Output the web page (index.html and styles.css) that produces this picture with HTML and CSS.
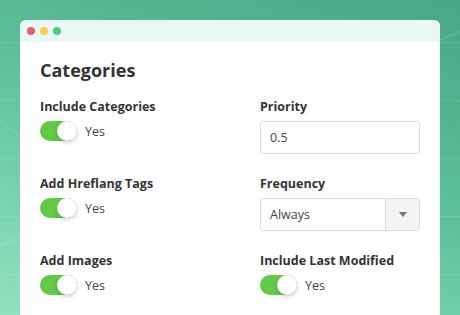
FILE: index.html
```html
<!DOCTYPE html>
<html lang="en">
<head>
    <meta charset="UTF-8">
    <title>Categories</title>
    <link rel="stylesheet" href="styles.css">
</head>
<body>

<div class="window">
    <div class="titlebar">
        <span class="dot red"></span>
        <span class="dot yellow"></span>
        <span class="dot green"></span>
    </div>

    <div class="content">
        <h1>Categories</h1>

        <div class="grid">
            <div class="field">
                <label>Include Categories</label>
                <div class="switch-row">
                    <span class="switch"><span class="knob"></span></span>
                    <span class="switch-text">Yes</span>
                </div>
            </div>
            <div class="field">
                <label>Priority</label>
                <div class="input">0.5</div>
            </div>

            <div class="field">
                <label>Add Hreflang Tags</label>
                <div class="switch-row">
                    <span class="switch"><span class="knob"></span></span>
                    <span class="switch-text">Yes</span>
                </div>
            </div>
            <div class="field">
                <label>Frequency</label>
                <div class="select">
                    <span class="select-value">Always</span>
                    <span class="select-arrow"><span class="caret"></span></span>
                </div>
            </div>

            <div class="field">
                <label>Add Images</label>
                <div class="switch-row">
                    <span class="switch"><span class="knob"></span></span>
                    <span class="switch-text">Yes</span>
                </div>
            </div>
            <div class="field">
                <label>Include Last Modified</label>
                <div class="switch-row">
                    <span class="switch"><span class="knob"></span></span>
                    <span class="switch-text">Yes</span>
                </div>
            </div>
        </div>
    </div>
</div>

</body>
</html>
```

FILE: styles.css
```css
body {
    margin: 0;
    height: 315px;
    overflow: hidden;
    font-family: "Open Sans", Arial, sans-serif;
    color: #333;
    padding: 20px 20px 0 20px;
    box-sizing: border-box;
    background:
        linear-gradient(155deg, transparent 0 46%, rgba(255, 255, 255, 0.12) 46.3%, transparent 46.8%),
        linear-gradient(35deg, transparent 0 30%, rgba(255, 255, 255, 0.1) 30.3%, transparent 30.8%),
        repeating-linear-gradient(180deg, transparent 0 42px, rgba(255, 255, 255, 0.1) 42px 43px, transparent 43px 58px),
        linear-gradient(200deg, #45a784 0%, #5cc09a 45%, #8fe3be 100%);
}

/* okno */
.window {
    background: #fff;
    border-radius: 6px 6px 0 0;
    height: 295px;
    overflow: hidden;
}

.titlebar {
    height: 22px;
    background: #eaf7f6;
    display: flex;
    align-items: center;
    gap: 5px;
    padding-left: 7px;
}

.dot {
    width: 8px;
    height: 8px;
    border-radius: 50%;
}

.dot.red { background: #ef5a6a; }
.dot.yellow { background: #f6d04d; }
.dot.green { background: #4ecb7e; }

.content {
    padding: 16px 20px 0 20px;
}

h1 {
    margin: 0 0 16px 0;
    font-size: 18px;
    line-height: 24px;
    font-weight: 700;
    color: #333;
}

.grid {
    display: grid;
    grid-template-columns: 220px 160px;
    row-gap: 21px;
}

.field label {
    display: block;
    font-size: 12.5px;
    line-height: 17px;
    font-weight: 700;
    color: #333;
    margin-bottom: 6px;
}

.switch-row {
    display: flex;
    align-items: center;
    gap: 8px;
}

.switch {
    display: flex;
    justify-content: flex-end;
    width: 37px;
    height: 20px;
    border-radius: 10px;
    background: #62c846;
}

.knob {
    width: 20px;
    height: 20px;
    border-radius: 50%;
    background: #fff;
    box-shadow: 0 2px 4px rgba(0, 0, 0, 0.18);
}

.switch-text {
    font-size: 12.5px;
    color: #444;
}

.input, .select {
    height: 33px;
    box-sizing: border-box;
    border: 1px solid #dcdcdc;
    border-radius: 3px;
    font-size: 12.5px;
    color: #444;
}

.input {
    padding: 0 9px;
    line-height: 31px;
}

.select {
    display: flex;
    overflow: hidden;
}

.select-value {
    flex: 1;
    padding: 0 9px;
    line-height: 31px;
}

.select-arrow {
    width: 33px;
    background: #f3f3f3;
    border-left: 1px solid #dcdcdc;
    display: flex;
    align-items: center;
    justify-content: center;
}

.caret {
    width: 0;
    height: 0;
    border-left: 4px solid transparent;
    border-right: 4px solid transparent;
    border-top: 5px solid #777;
}
```
